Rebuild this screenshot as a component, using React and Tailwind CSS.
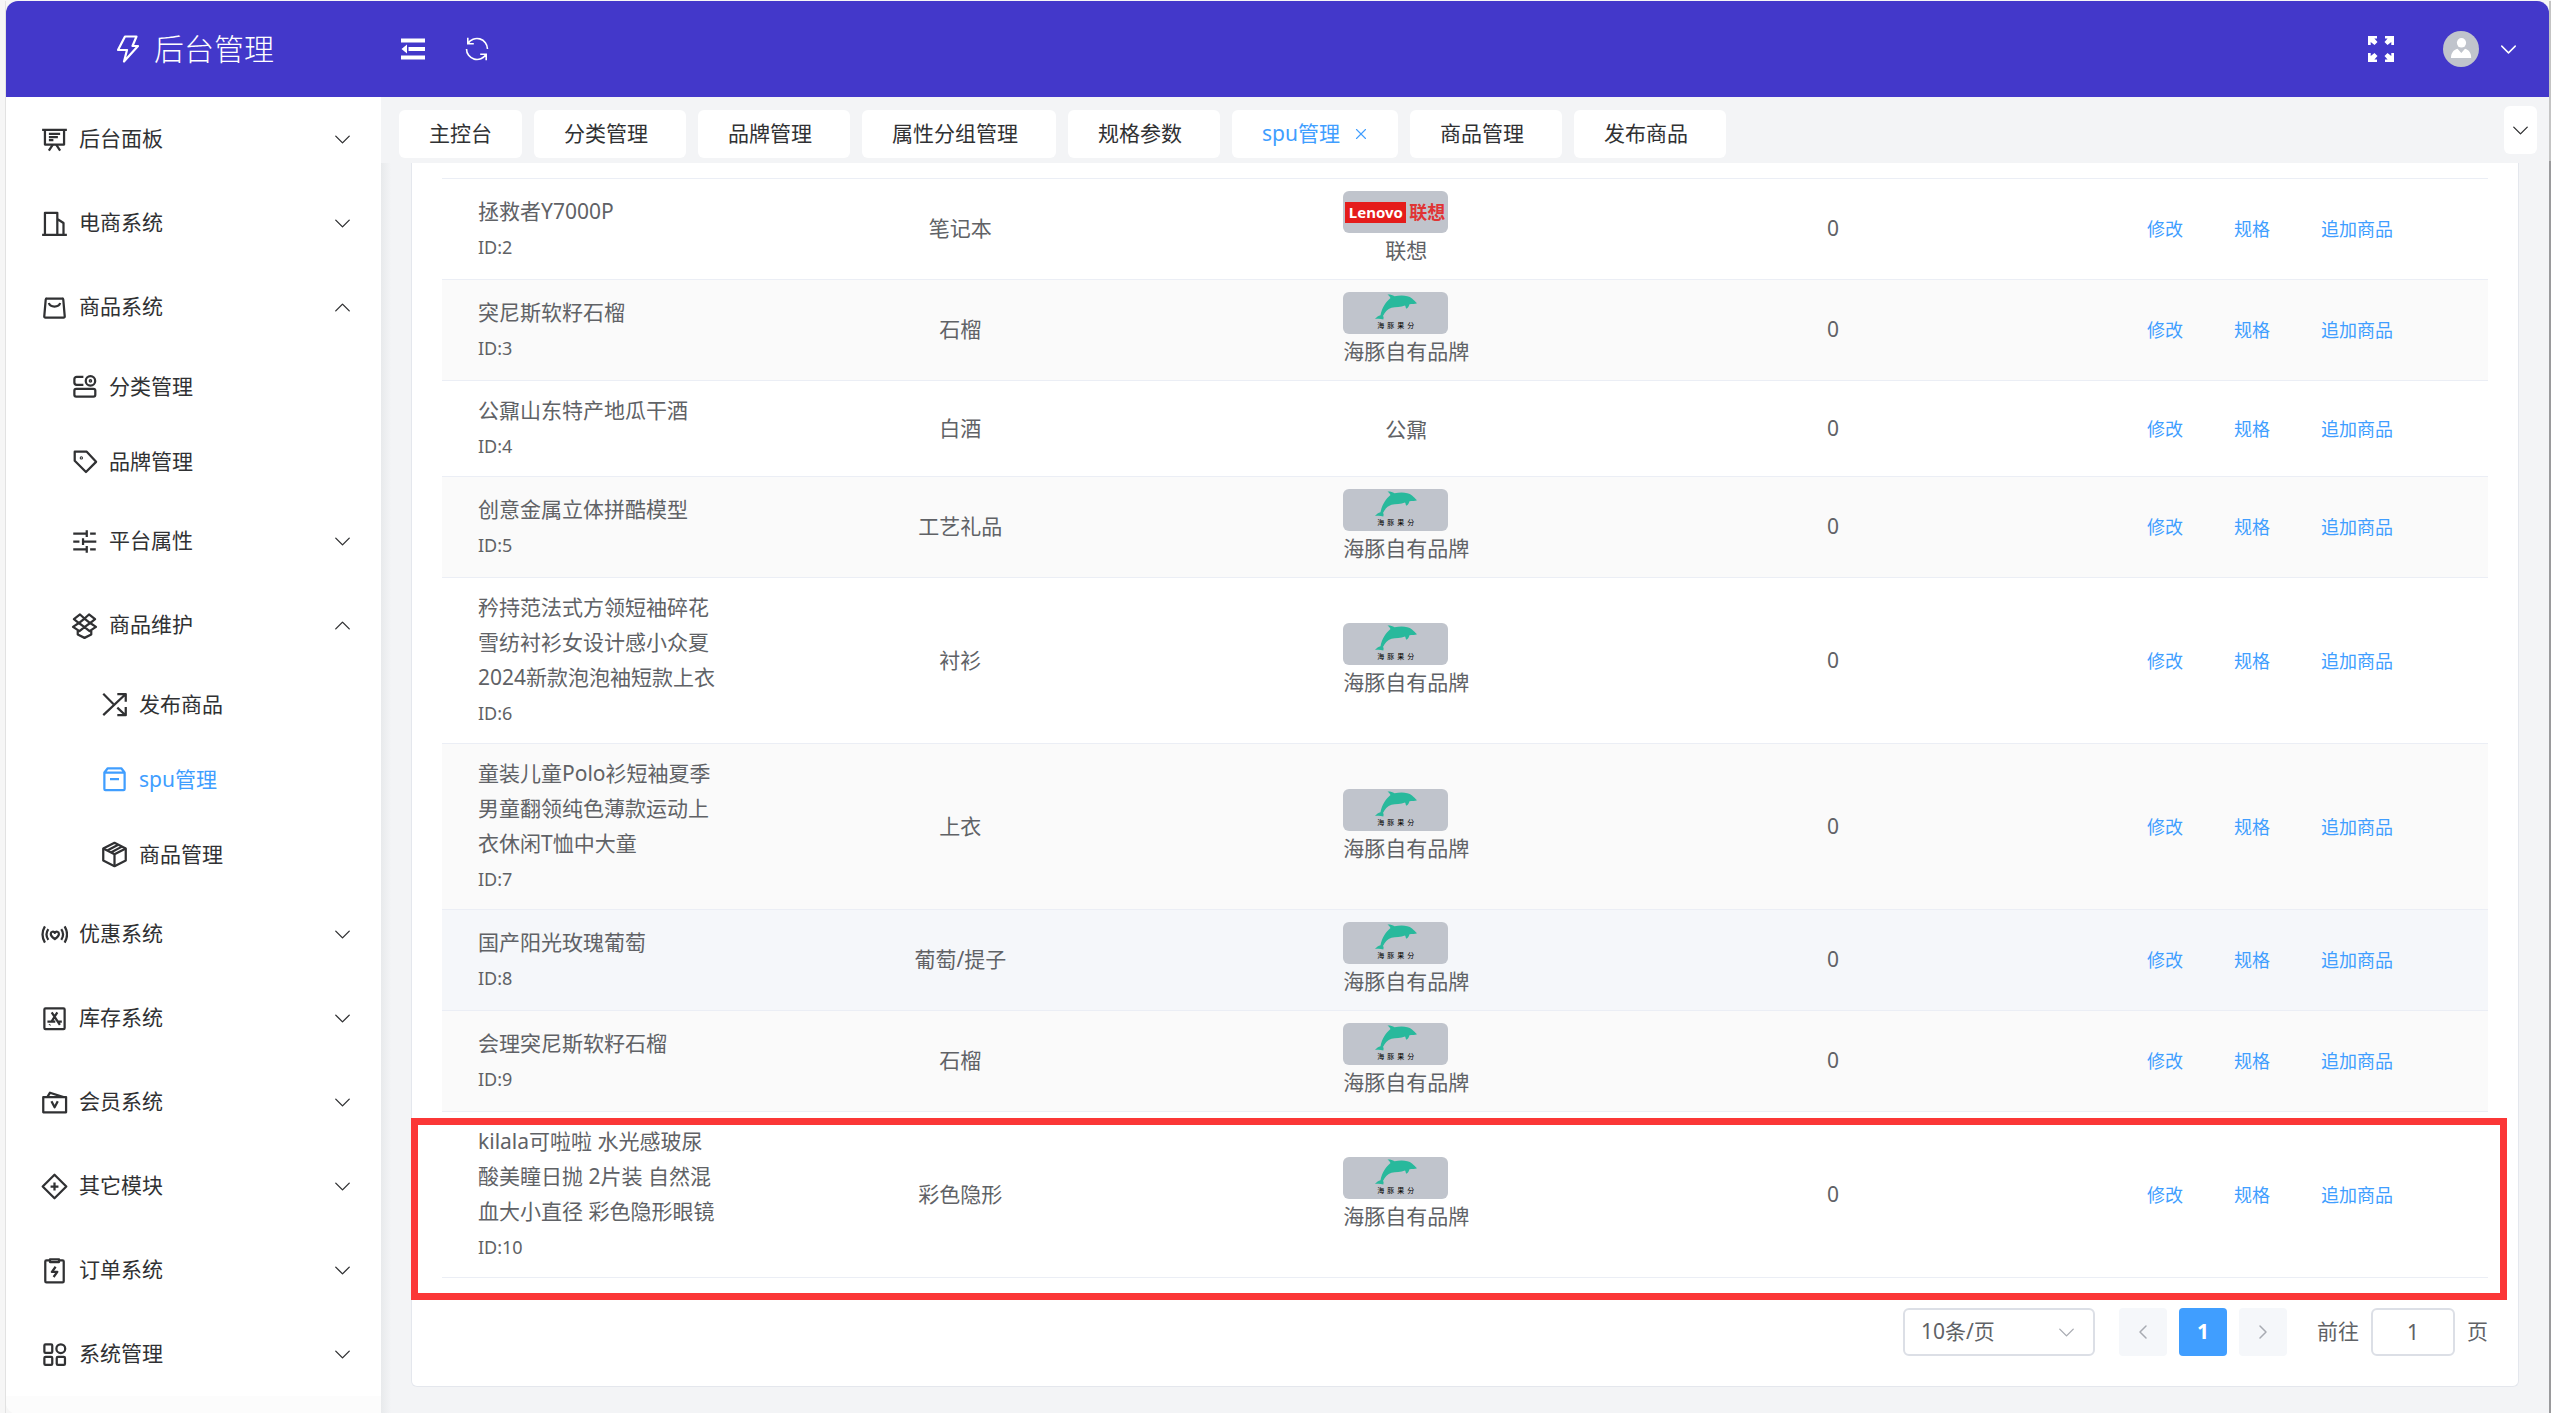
import React, { useState } from 'react';
import { ChevronDown, ChevronUp, ChevronLeft, ChevronRight, X } from 'lucide-react';

const icons = {
    board: (
        <>
            <path d="M1 3.5h22M3.5 3.5v13h17v-13M7 7h10M7 9.8h8M7 12.6h4" />
            <path d="M10.5 16.5L7 21.8M13.5 16.5l3.5 5.3" />
        </>
    ),
    building: <path d="M1 22h22M3.5 22V2.5h11V22M14.5 8l5.5 3.5V22" />,
    bag: (
        <>
            <path d="M5.2 4h13.6a1 1 0 0 1 1 .9l1.3 15a1 1 0 0 1-1 1.1H3.9a1 1 0 0 1-1-1.1l1.3-15a1 1 0 0 1 1-.9z" />
            <path d="M7 8c1.2 4.2 8.8 4.2 10 0" />
        </>
    ),
    category: (
        <>
            <path d="M11 3.5H5a2 2 0 0 0-2 2v3a2 2 0 0 0 2 2h6" />
            <circle cx="17.3" cy="7" r="4.2" />
            <circle cx="17.3" cy="7" r="0.6" />
            <rect x="3" y="14" width="18.6" height="7" rx="1.6" />
        </>
    ),
    tag: (
        <>
            <path d="M3.3 3.3H14l8.3 9-9 9-10-10z" />
            <circle cx="9.2" cy="8.8" r="0.5" />
        </>
    ),
    sliders: (
        <path d="M2 5h12M14 2v6M17 5h5M2 12h5.5M10.7 9v6M10.7 12h11.8M2 19h12M14 16v6M17 19h5" />
    ),
    dropbox: (
        <>
            <path d="M8 2.2L2.6 6.4 7 9.8l5-4zM16 2.2l5.4 4.2L17 9.8l-5-4z" />
            <path d="M7 9.8L1.8 13.2 7.5 17l4.5-3.6zM17 9.8l5.2 3.4-5.7 3.8-4.5-3.6z" />
            <path d="M6 16.5V20l6 3 6-3v-3.5" />
        </>
    ),
    shuffle: (
        <path d="M2 21.5L22 2.7M14.5 2.7H22V9.6M2 2.5l9 9M14.5 14.8l7 6.5M14.5 21.5H22v-7.3" />
    ),
    box: (
        <path d="M3 5.8h18v14.7a1 1 0 0 1-1 1H4a1 1 0 0 1-1-1V5.8L6 2h12l3 3.8M8 11.7h8" />
    ),
    cube: (
        <>
            <path d="M12 1.6l10 5.1v10.6l-10 5.1-10-5.1V6.7z" />
            <path d="M2 6.7l10 5 10-5M12 11.7v10.7M15.3 3.4L6 8.2M18.6 5L9.2 10" />
        </>
    ),
    heartbeat: (
        <>
            <path d="M12.3 16c-2.4-1.7-3.6-3-3.6-4.5 0-2.2 2.6-2.6 3.6-1 1-1.6 3.6-1.2 3.6 1 0 1.5-1.2 2.8-3.6 4.5z" />
            <path d="M6.5 7.3c-2 2.9-2 6.6 0 9.5M18 7.3c2 2.9 2 6.6 0 9.5M3.5 4.8c-2.6 4.3-2.6 10 0 14.4M21 4.8c2.6 4.3 2.6 10 0 14.4" />
        </>
    ),
    appstore: (
        <>
            <rect x="3" y="3" width="18" height="18.5" rx="1" />
            <path d="M9.5 6.5l7.3 11.2M14.5 6.5l-5 8M5.7 14.8h7M15.5 14.8h3M8 17.2l-.4.6" />
        </>
    ),
    member: (
        <>
            <path d="M2 7.2h20.3v13.5H2zM5.6 7.2L8 3.3l12 3.9" />
            <path d="M9.3 10.8l2.8 5.4 2.8-5.4" />
        </>
    ),
    diamond: <path d="M12 1.5L22.5 12 12 22.5 1.5 12zM12 8.5v7M8.5 12h7" />,
    order: (
        <>
            <path d="M8 3H4.8a1 1 0 0 0-1 1v17.5a1 1 0 0 0 1 1h14.4a1 1 0 0 0 1-1V4a1 1 0 0 0-1-1H16" />
            <rect x="8" y="2" width="8" height="2.5" />
            <path d="M13 8.7l-3.3 4.5h4.8l-3.3 4.6" />
        </>
    ),
    grid: (
        <>
            <rect x="3" y="3" width="7" height="7.5" rx="1" />
            <circle cx="17.6" cy="6.8" r="3.9" />
            <rect x="3" y="14.2" width="7" height="7" rx="1" />
            <rect x="14" y="14.2" width="7.3" height="7" rx="1" />
        </>
    ),
};

const Icon = ({ name }) => (
    <svg
        className="size-[27px] shrink-0"
        viewBox="0 0 24 24"
        fill="none"
        stroke="currentColor"
        strokeWidth="2"
        strokeLinejoin="round">
        {icons[name]}
    </svg>
);

const menu = [
    { label: '后台面板', icon: 'board', level: 0, arrow: 'down' },
    { label: '电商系统', icon: 'building', level: 0, arrow: 'down' },
    { label: '商品系统', icon: 'bag', level: 0, arrow: 'up' },
    { label: '分类管理', icon: 'category', level: 1 },
    { label: '品牌管理', icon: 'tag', level: 1 },
    { label: '平台属性', icon: 'sliders', level: 1, arrow: 'down' },
    { label: '商品维护', icon: 'dropbox', level: 1, arrow: 'up' },
    { label: '发布商品', icon: 'shuffle', level: 2 },
    { label: 'spu管理', icon: 'box', level: 2, active: true },
    { label: '商品管理', icon: 'cube', level: 2 },
    { label: '优惠系统', icon: 'heartbeat', level: 0, arrow: 'down' },
    { label: '库存系统', icon: 'appstore', level: 0, arrow: 'down' },
    { label: '会员系统', icon: 'member', level: 0, arrow: 'down' },
    { label: '其它模块', icon: 'diamond', level: 0, arrow: 'down' },
    { label: '订单系统', icon: 'order', level: 0, arrow: 'down' },
    { label: '系统管理', icon: 'grid', level: 0, arrow: 'down' },
];

const indents = ['pl-[35px]', 'pl-[65px]', 'pl-[95px]'];

const tabs = ['主控台', '分类管理', '品牌管理', '属性分组管理', '规格参数', 'spu管理', '商品管理', '发布商品'];

const rows = [
    { id: 2, name: '拯救者Y7000P', category: '笔记本', brand: '联想', logo: 'lenovo' },
    { id: 3, name: '突尼斯软籽石榴', category: '石榴', brand: '海豚自有品牌', logo: 'dolphin' },
    { id: 4, name: '公鼐山东特产地瓜干酒', category: '白酒', brand: '公鼐' },
    { id: 5, name: '创意金属立体拼酷模型', category: '工艺礼品', brand: '海豚自有品牌', logo: 'dolphin' },
    { id: 6, name: '矜持范法式方领短袖碎花雪纺衬衫女设计感小众夏2024新款泡泡袖短款上衣', category: '衬衫', brand: '海豚自有品牌', logo: 'dolphin' },
    { id: 7, name: '童装儿童Polo衫短袖夏季男童翻领纯色薄款运动上衣休闲T恤中大童', category: '上衣', brand: '海豚自有品牌', logo: 'dolphin' },
    { id: 8, name: '国产阳光玫瑰葡萄', category: '葡萄/提子', brand: '海豚自有品牌', logo: 'dolphin', hover: true },
    { id: 9, name: '会理突尼斯软籽石榴', category: '石榴', brand: '海豚自有品牌', logo: 'dolphin' },
    { id: 10, name: 'kilala可啦啦 水光感玻尿酸美瞳日抛 2片装 自然混血大小直径 彩色隐形眼镜', category: '彩色隐形', brand: '海豚自有品牌', logo: 'dolphin' },
];

const Header = () => (
    <header className="flex h-24 items-center bg-[#4338ca] text-white">
        <div className="flex w-[375px] items-center pl-[108px]">
            <svg className="size-7" viewBox="0 0 28 28" fill="none" stroke="currentColor" strokeWidth="2.2" strokeLinejoin="round">
                <path d="M11 1.5h11.5L18.5 11H24L10 26.5 13 15H4z" />
            </svg>
            <h1 className="ml-3 text-3xl font-light">后台管理</h1>
        </div>
        <button aria-label="收起菜单" className="ml-4 flex size-8 items-center justify-center">
            <svg className="size-6" viewBox="0 0 24 24" fill="currentColor">
                <path d="M0 1.5h24v4H0zM7.5 10H24v4H7.5zM0 18.5h24v4H0zM6 7.5v9L0.5 12z" />
            </svg>
        </button>
        <button aria-label="刷新" className="ml-8 flex size-8 items-center justify-center">
            <svg className="size-6" viewBox="0 0 24 24" fill="none" stroke="currentColor" strokeWidth="1.6">
                <path d="M2.8 0.8v6h6M3 6.6A10.5 10.5 0 0 1 22.5 12M21.2 23.2v-6h-6M21 17.4A10.5 10.5 0 0 1 1.5 12" />
            </svg>
        </button>
        <button aria-label="全屏" className="ml-auto flex size-8 items-center justify-center">
            <svg className="size-[26px]" viewBox="0 0 26 26" fill="currentColor">
                <path d="M0 0h9v2.5H6.4L9.5 6 6.5 9 2.7 6v3H0zM26 0v9h-2.7V6L19.5 9l-3-3 3.1-3.5H17V0zM0 26v-9h2.7v3l3.8-3 3 3-3.1 3.5H9V26zM26 26h-9v-2.5h2.6L16.5 20l3-3 3.8 3v-3H26z" />
            </svg>
        </button>
        <button aria-label="用户" className="mr-[27px] ml-[46px] flex items-center gap-4">
            <svg className="size-9" viewBox="0 0 36 36">
                <circle cx="18" cy="18" r="18" fill="#c0c4cc" />
                <ellipse cx="18.5" cy="11.8" rx="4.6" ry="4.8" fill="#fff" />
                <path d="M8 27c0-5 2.5-8 6.5-9.2L18.3 22l3.7-4.2c4 1.2 6.2 4.2 6.2 9.2z" fill="#fff" />
            </svg>
            <ChevronDown size={27} strokeWidth={1.3} />
        </button>
    </header>
);

const Sidebar = () => (
    <aside className="flex w-[375px] shrink-0 flex-col bg-white text-[21px] text-[#303133]">
        <nav>
            {menu.map((item) => (
                <a
                    key={item.label + item.level}
                    href="#"
                    className={`flex items-center gap-[11px] pr-[25px] ${indents[item.level]} ${
                        item.arrow ? 'h-[84px]' : 'h-[75px]'
                    } ${item.active ? 'text-[#409eff]' : ''}`}>
                    <Icon name={item.icon} />
                    <span>{item.label}</span>
                    {item.arrow === 'down' && <ChevronDown size={27} strokeWidth={1.2} className="ml-auto" />}
                    {item.arrow === 'up' && <ChevronUp size={27} strokeWidth={1.2} className="ml-auto" />}
                </a>
            ))}
        </nav>
        <div className="flex-1 bg-[#fcfcfc]" />
    </aside>
);

const TabBar = () => {
    const [active, setActive] = useState('spu管理');

    return (
        <div className="flex h-[66px] items-start justify-between pr-3 pl-[18px] text-[21px] text-[#303133]">
            <div className="flex gap-3 pt-[13px]">
                {tabs.map((tab, i) => (
                    <button
                        key={tab}
                        onClick={() => setActive(tab)}
                        className={`flex h-12 items-center gap-3 rounded-md bg-white pl-[30px] whitespace-nowrap ${
                            active === tab
                                ? 'pr-7 text-[#409eff]'
                                : i === 0 ? 'pr-[30px]' : 'pr-[38px]'
                        }`}>
                        {tab}
                        {active === tab && <X size={18} strokeWidth={1.5} />}
                    </button>
                ))}
            </div>
            <button aria-label="更多标签" className="mt-[9px] flex h-12 w-[33px] items-center justify-center rounded-md bg-white">
                <ChevronDown size={27} strokeWidth={1.2} />
            </button>
        </div>
    );
};

const LenovoLogo = () => (
    <div className="flex h-[42px] w-[105px] items-center gap-[3px] rounded-md bg-[#c0c4cc] pl-[2px] leading-none font-bold">
        <span className="flex h-[21px] w-[61px] items-center justify-center bg-[#e51c1b] text-[15px] text-white">Lenovo</span>
        <span className="text-lg text-[#e03434]">联想</span>
    </div>
);

const DolphinLogo = () => (
    <div className="flex h-[42px] w-[105px] flex-col items-center rounded-md bg-[#c0c4cc] pt-[2px]">
        <svg className="h-[26px] w-[42px]" viewBox="0 0 42 26" fill="#28b99c">
            <path d="M12.5 0.5C15 0.3 17.5 1 19.5 2.3C26 1 33 1.2 37 4.5C39 6.2 40 7.5 42 9.3C40 10.3 37 10 34.5 10.3C33.8 12 33.5 13.5 31.5 14.8C30.5 14 30.8 12.5 30 11.5C26 13 20.5 13 16.5 13.7C12.5 15 9.5 18.5 8 22C9 23 8.5 24.5 8.3 25.5C5.5 24.5 3 24.5 0 25C1.5 23 3.5 22 5.5 21.3C6.5 15 10.5 8 15.5 4C14.8 2.5 13.8 1.5 12.5 0.5Z" />
        </svg>
        <span className="flex gap-[3px] text-[7px] leading-[12px] text-black">
            <span>海</span><span>豚</span><span>果</span><span>分</span>
        </span>
    </div>
);

const SpuTable = () => (
    <div className="relative">
        <table className="w-full table-fixed border-collapse text-center text-[21px] text-[#606266]">
            <colgroup>
                <col className="w-[280px]" />
                <col className="w-[23.3%]" />
                <col className="w-[20.3%]" />
                <col className="w-[21.4%]" />
                <col />
            </colgroup>
            <tbody>
                {rows.map((row, i) => (
                    <tr
                        key={row.id}
                        className={`border-y border-[#ebeef5] ${
                            row.hover ? 'bg-[#f5f7fa]' : i % 2 ? 'bg-[#fafafa]' : ''
                        }`}>
                        <td className="py-3 pr-1 pl-9 text-left">
                            <div className="leading-[35px]">{row.name}</div>
                            <div className="text-lg leading-9">ID:{row.id}</div>
                        </td>
                        <td>{row.category}</td>
                        <td className="py-3">
                            <div className="mx-auto w-[126px] leading-[34px]">
                                {row.logo === 'lenovo' && <LenovoLogo />}
                                {row.logo === 'dolphin' && <DolphinLogo />}
                                {row.brand}
                            </div>
                        </td>
                        <td>0</td>
                        <td className="text-lg text-[#409eff]">
                            <div className="flex justify-center gap-[51px]">
                                <button>修改</button>
                                <button>规格</button>
                                <button>追加商品</button>
                            </div>
                        </td>
                    </tr>
                ))}
            </tbody>
        </table>
        {/* highlight frame round the last row */}
        <div className="pointer-events-none absolute -right-[19px] -bottom-[22px] -left-[31px] h-[182px] border-[7px] border-[#fb3737]" />
    </div>
);

const Pagination = () => (
    <div className="mt-[30px] flex h-12 items-center justify-end text-[21px] text-[#606266]">
        <div className="relative mr-6">
            <select
                aria-label="每页条数"
                className="h-12 w-48 appearance-none rounded-md border-2 border-[#dcdfe6] bg-white pl-4 outline-none">
                <option>10条/页</option>
            </select>
            <ChevronDown size={27} strokeWidth={1.2} className="pointer-events-none absolute top-[11px] right-[15px] text-[#a8abb2]" />
        </div>
        <div className="flex gap-3">
            <button aria-label="上一页" className="flex size-12 items-center justify-center rounded-sm bg-[#f5f7fa] text-[#a8abb2]">
                <ChevronLeft size={24} strokeWidth={1.5} />
            </button>
            <button className="size-12 rounded-sm bg-[#409eff] font-bold text-white">1</button>
            <button aria-label="下一页" className="flex size-12 items-center justify-center rounded-sm bg-[#f5f7fa] text-[#a8abb2]">
                <ChevronRight size={24} strokeWidth={1.5} />
            </button>
        </div>
        <label className="ml-[30px] flex items-center gap-3">
            前往
            <input
                type="text"
                defaultValue="1"
                className="h-12 w-21 rounded-md border-2 border-[#dcdfe6] bg-white text-center outline-none"
            />
            页
        </label>
    </div>
);

const App = () => (
    <div className="flex min-h-screen bg-[#f6f6f6] pt-px font-['Noto_Sans','Noto_Sans_CJK_SC',sans-serif]">
        <div className="w-[6px] shrink-0 border-r border-[#e2e2e2]" />
        <div className="flex min-w-0 flex-1 flex-col overflow-hidden rounded-xl rounded-br-none bg-[#f3f4f6]">
            <Header />
            <div className="flex flex-1">
                <Sidebar />
                <main className="flex min-w-0 flex-1 flex-col">
                    <TabBar />
                    <div className="flex flex-1">
                        <div className="w-[10px] shrink-0 bg-linear-to-r from-[#e8eaec] to-[#f3f4f6]" />
                        <div className="mr-[30px] mb-[27px] ml-5 min-w-0 flex-1 rounded-b-md border border-t-0 border-[#e4e7ed] bg-white px-[30px] pt-[15px] pb-[30px]">
                            <SpuTable />
                            <Pagination />
                        </div>
                    </div>
                </main>
            </div>
        </div>
        <div className="flex w-[2px] shrink-0 flex-col">
            <div className="h-40 bg-[#c4c4c4]" />
            <div className="flex-1 bg-[#9a9a9c]" />
        </div>
    </div>
);

export default App;
